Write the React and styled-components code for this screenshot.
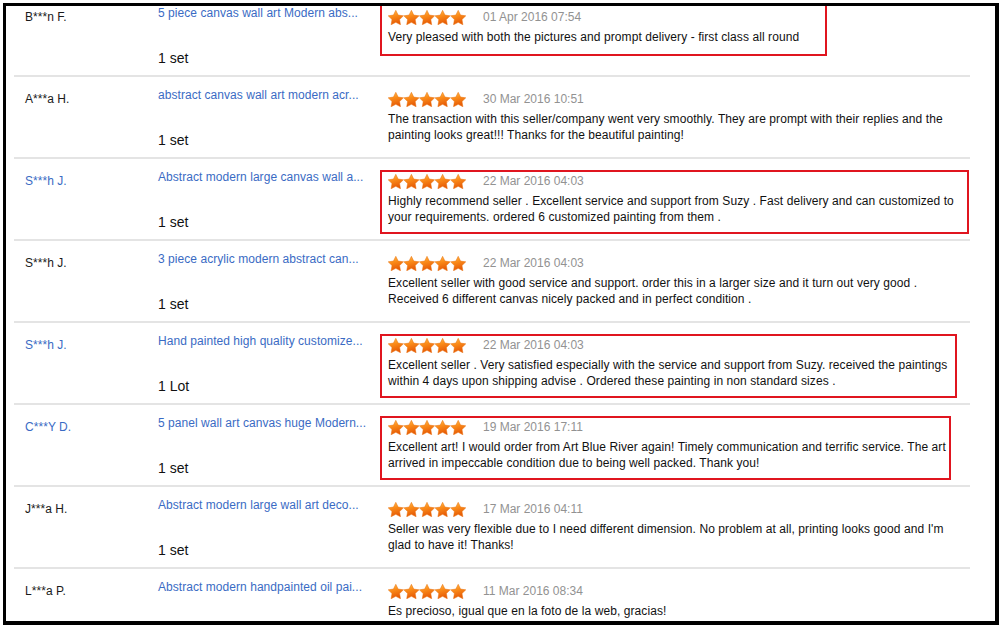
import React from 'react';
import styled, {createGlobalStyle} from 'styled-components';

const GlobalStyle = createGlobalStyle`
html, body {
	margin: 0;
	padding: 0;
	background: #fff;
}
body {
	font-family: "Liberation Sans", Arial, sans-serif;
	color: #222;
}
`;

const feedback = [
	{name: 'B***n F.', product: '5 piece canvas wall art Modern abs...', qty: '1 set', date: '01 Apr 2016 07:54',
		text: 'Very pleased with both the pictures and prompt delivery - first class all round', box: 447, tall: true},
	{name: 'A***a H.', product: 'abstract canvas wall art modern acr...', qty: '1 set', date: '30 Mar 2016 10:51',
		text: 'The transaction with this seller/company went very smoothly. They are prompt with their replies and the painting looks great!!! Thanks for the beautiful painting!'},
	{name: 'S***h J.', linked: true, product: 'Abstract modern large canvas wall a...', qty: '1 set', date: '22 Mar 2016 04:03',
		text: 'Highly recommend seller . Excellent service and support from Suzy . Fast delivery and can customized to your requirements. ordered 6 customized painting from them .', box: 589},
	{name: 'S***h J.', product: '3 piece acrylic modern abstract can...', qty: '1 set', date: '22 Mar 2016 04:03',
		text: 'Excellent seller with good service and support. order this in a larger size and it turn out very good . Received 6 different canvas nicely packed and in perfect condition .'},
	{name: 'S***h J.', linked: true, product: 'Hand painted high quality customize...', qty: '1 Lot', date: '22 Mar 2016 04:03',
		text: 'Excellent seller . Very satisfied especially with the service and support from Suzy. received the paintings within 4 days upon shipping advise . Ordered these painting in non standard sizes .', box: 577},
	{name: 'C***Y D.', linked: true, product: '5 panel wall art canvas huge Modern...', qty: '1 set', date: '19 Mar 2016 17:11',
		text: 'Excellent art! I would order from Art Blue River again! Timely communication and terrific service. The art arrived in impeccable condition due to being well packed. Thank you!', box: 571},
	{name: 'J***a H.', product: 'Abstract modern large wall art deco...', qty: '1 set', date: '17 Mar 2016 04:11',
		text: 'Seller was very flexible due to I need different dimension. No problem at all, printing looks good and I\'m glad to have it! Thanks!'},
	{name: 'L***a P.', product: 'Abstract modern handpainted oil pai...', qty: '1 set', date: '11 Mar 2016 08:34',
		text: 'Es precioso, igual que en la foto de la web, gracias!'},
];

const Frame = styled.div`
box-sizing: border-box;
margin: 3px 0 0 3px;
width: 996px;
height: 622px;
border-style: solid;
border-color: #000;
border-width: 3px 4px 4px 3px;
overflow: hidden;
background: #fff;
`;

const List = styled.div`
margin-top: -11px;
`;

const Row = styled.div`
display: grid;
grid-template-columns: 144px 222px 1fr;
height: 80px;
margin: 0 25px 0 8px;
border-bottom: 2px solid #e4e4e4;
`;

const Buyer = styled.div`
padding: 14px 0 0 11px;
font-size: 12px;
line-height: 16px;
letter-spacing: 0.05px;
color: ${p => p.$linked ? '#3a6bc4' : '#1a1a1a'};
`;

const Product = styled.div`
display: flex;
flex-direction: column;
padding-top: 10px;
`;

const ProductLink = styled.a`
font-size: 12px;
line-height: 16px;
letter-spacing: 0.05px;
color: #3a6bc4;
text-decoration: none;
white-space: nowrap;
`;

const Quantity = styled.div`
margin-top: 29px;
font-size: 14px;
line-height: 16px;
color: #111;
`;

const Review = styled.div`
padding-top: 11px;
`;

const Box = styled.div`
box-sizing: border-box;
width: ${p => p.$width ? `${p.$width}px` : 'auto'};
margin-top: ${p => p.$tall ? '-8px' : '0'};
padding: ${p => p.$tall ? '9px 0 9px 6px' : '1px 0 7px 6px'};
border: 2px solid ${p => p.$width ? '#e0151f' : 'transparent'};
`;

const Meta = styled.div`
display: flex;
align-items: center;
height: 16px;
gap: 17px;
`;

const Date = styled.span`
font-size: 12px;
line-height: 16px;
color: #929292;
`;

const Comment = styled.p`
margin: 4px 0 0;
max-width: 572px;
font-size: 12px;
line-height: 16px;
letter-spacing: 0.08px;
color: #111;
`;

const STAR = '7.8,0.3 10.15,5.06 15.41,5.83 11.6,9.54 12.5,14.77 7.8,12.3 3.1,14.77 4,9.54 0.19,5.83 5.45,5.06';

const Stars = () =>
	<svg width="78" height="15" viewBox="0 0 78 15">
		<defs>
			<linearGradient id="starFill" x1="0" y1="0" x2="0.3" y2="1">
				<stop offset="0" stopColor="#ffc45a" />
				<stop offset="0.45" stopColor="#fb8d1a" />
				<stop offset="1" stopColor="#e65a06" />
			</linearGradient>
		</defs>
		{[0, 1, 2, 3, 4].map(i =>
			<polygon key={i} points={STAR} transform={`translate(${i * 15.6} 0)`}
				fill="url(#starFill)" stroke="#e8700f" strokeWidth="0.5" strokeLinejoin="round" />
		)}
	</svg>;

const FeedbackRow = ({name, linked, product, qty, date, text, box, tall}) =>
	<Row>
		<Buyer $linked={linked}>{name}</Buyer>
		<Product>
			<ProductLink href="#">{product}</ProductLink>
			<Quantity>{qty}</Quantity>
		</Product>
		<Review>
			<Box $width={box} $tall={tall}>
				<Meta>
					<Stars />
					<Date>{date}</Date>
				</Meta>
				<Comment>{text}</Comment>
			</Box>
		</Review>
	</Row>;

export default function App() {
	return <>
		<GlobalStyle />
		<Frame>
			<List>
				{feedback.map((item, i) => <FeedbackRow key={i} {...item} />)}
			</List>
		</Frame>
	</>;
}
